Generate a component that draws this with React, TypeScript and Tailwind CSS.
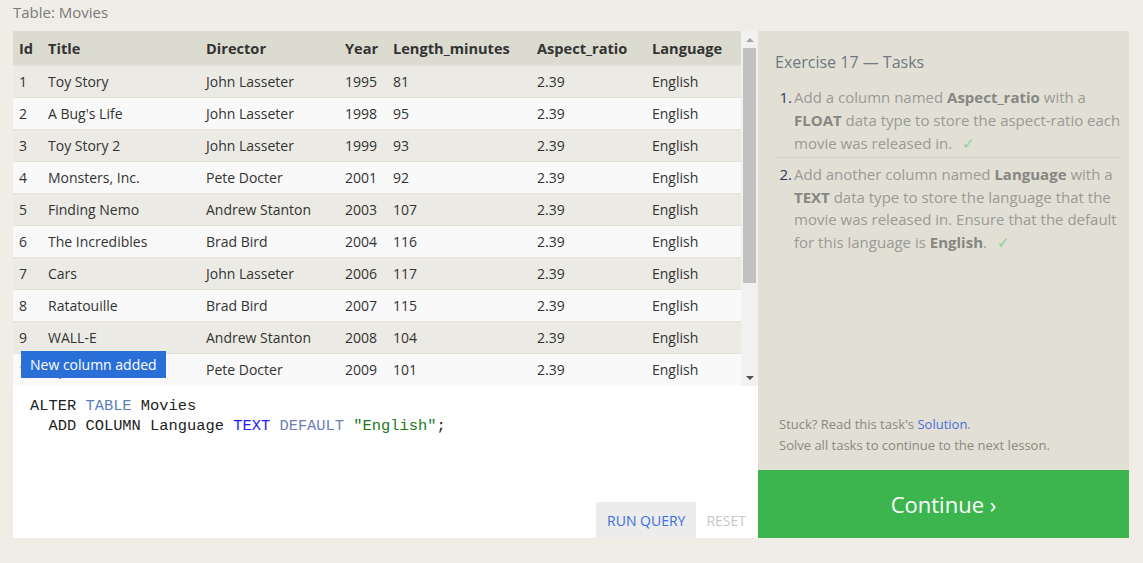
import React from 'react'

const movies = [
  [1, 'Toy Story', 'John Lasseter', 1995, 81],
  [2, "A Bug's Life", 'John Lasseter', 1998, 95],
  [3, 'Toy Story 2', 'John Lasseter', 1999, 93],
  [4, 'Monsters, Inc.', 'Pete Docter', 2001, 92],
  [5, 'Finding Nemo', 'Andrew Stanton', 2003, 107],
  [6, 'The Incredibles', 'Brad Bird', 2004, 116],
  [7, 'Cars', 'John Lasseter', 2006, 117],
  [8, 'Ratatouille', 'Brad Bird', 2007, 115],
  [9, 'WALL-E', 'Andrew Stanton', 2008, 104],
  [10, 'Up', 'Pete Docter', 2009, 101],
]

const cols = 'grid grid-cols-[29px_158px_139px_48px_144px_115px_89px]'

export default function App() {
  return (
    <div className="min-h-screen bg-[#f0ede6] px-[13px] pt-[2px] text-[15px] font-['Segoe_UI','Open_Sans',sans-serif]" style={{ width: 1143, height: 563 }}>
      <div className="h-[29px] leading-[20px] text-[#7a7a7a]">Table: Movies</div>

      <div className="flex w-[1116px]">
        {/* left side: table + editor */}
        <div className="flex w-[745px] flex-col">
          <div className="relative flex h-[355px] bg-white">
            <div className="w-[728px] overflow-hidden">
              <div className={`${cols} h-[34px] items-center bg-[#dcdbd0] pl-[6px] pt-[1px] text-[14.6px] font-bold text-[#333]`}>
                <span>Id</span>
                <span>Title</span>
                <span>Director</span>
                <span>Year</span>
                <span>Length_minutes</span>
                <span>Aspect_ratio</span>
                <span>Language</span>
              </div>
              {movies.map((m, i) => (
                <div
                  key={m[0]}
                  className={`${cols} h-[32px] items-center border-t border-[#e2e1da] pl-[6px] text-[14px] text-[#333] ${i % 2 === 0 ? 'bg-[#ebeae4]' : 'bg-[#f9f9f9]'}`}
                >
                  <span>{m[0]}</span>
                  <span>{m[1]}</span>
                  <span>{m[2]}</span>
                  <span>{m[3]}</span>
                  <span>{m[4]}</span>
                  <span>2.39</span>
                  <span>English</span>
                </div>
              ))}
            </div>
            {/* scrollbar */}
            <div className="flex w-[17px] flex-col items-center bg-[#f1f1f1]">
              <div className="flex h-[17px] items-center justify-center">
                <div className="h-0 w-0 border-x-[4px] border-b-[4px] border-x-transparent border-b-[#a3a3a3]" />
              </div>
              <div className="h-[235px] w-[13px] bg-[#c1c1c1]" />
              <div className="flex-1" />
              <div className="flex h-[17px] items-center justify-center">
                <div className="h-0 w-0 border-x-[4px] border-t-[4px] border-x-transparent border-t-[#505050]" />
              </div>
            </div>
            <div className="absolute left-[8px] top-[320px] bg-[#2a6fd7] px-[9px] text-[14px] leading-[27px] text-white">
              New column added
            </div>
          </div>

          <div className="flex h-[152px] flex-col bg-white">
            <pre className="flex-1 pl-[17px] pt-[10px] text-[15.4px] leading-[20px] text-[#222] font-['Liberation_Mono',monospace]">
              ALTER <span className="text-[#5a7fc0]">TABLE</span> Movies{'\n'}
              {'  '}ADD COLUMN Language <span className="text-[#1a1aff]">TEXT</span>{' '}
              <span className="text-[#6c7fb8]">DEFAULT</span>{' '}
              <span className="text-[#1a7a1a]">"English"</span>;
            </pre>
            <div className="flex justify-end">
              <button className="h-[36px] bg-[#ececec] pl-[11px] pr-[11px] text-[14px] text-[#3d6ee0]">RUN QUERY</button>
              <button className="h-[36px] pl-[10px] pr-[12px] text-[14px] text-[#c8c8c8]">RESET</button>
            </div>
          </div>
        </div>

        {/* right side: tasks */}
        <div className="flex w-[371px] flex-col">
          <div className="flex h-[439px] flex-col bg-[#e2e0d5] pl-[17px] pr-[7px]">
            <div className="pt-[20px] text-[16px] leading-[22px] text-[#6f7883]">Exercise 17 — Tasks</div>
            <ol className="mt-[13px] text-[15px] leading-[23px] text-[#9a9a96]">
              <li className="flex border-b border-[#d5d3c8] pb-[2px]">
                <span className="w-[19px] shrink-0 pr-[2px] text-right text-[#2c3a66]">1.</span>
                <span>
                  Add a column named <b className="text-[#868682]">Aspect_ratio</b> with a{' '}
                  <b className="text-[#868682]">FLOAT</b> data type to store the aspect-ratio each movie was released in.
                  <span className="ml-[10px] text-[#8fcf98]">✓</span>
                </span>
              </li>
              <li className="flex pt-[5px]">
                <span className="w-[19px] shrink-0 pr-[2px] text-right text-[#2c3a66]">2.</span>
                <span className="leading-[22.7px]">
                  Add another column named <b className="text-[#868682]">Language</b> with a{' '}
                  <b className="text-[#868682]">TEXT</b> data type to store the language that the movie was released in.
                  Ensure that the default for this language is <b className="text-[#868682]">English</b>.
                  <span className="ml-[10px] text-[#8fcf98]">✓</span>
                </span>
              </li>
            </ol>
            <div className="flex-1" />
            <div className="pb-[14px] pl-[4px] text-[13px] leading-[21px] text-[#8a8882]">
              <div>
                Stuck? Read this task's <span className="text-[#4a6de0]">Solution</span>.
              </div>
              <div>Solve all tasks to continue to the next lesson.</div>
            </div>
          </div>
          <div className="flex h-[68px] items-center justify-center bg-[#3cb54e] text-[22px] text-white">
            Continue ›
          </div>
        </div>
      </div>
    </div>
  )
}
